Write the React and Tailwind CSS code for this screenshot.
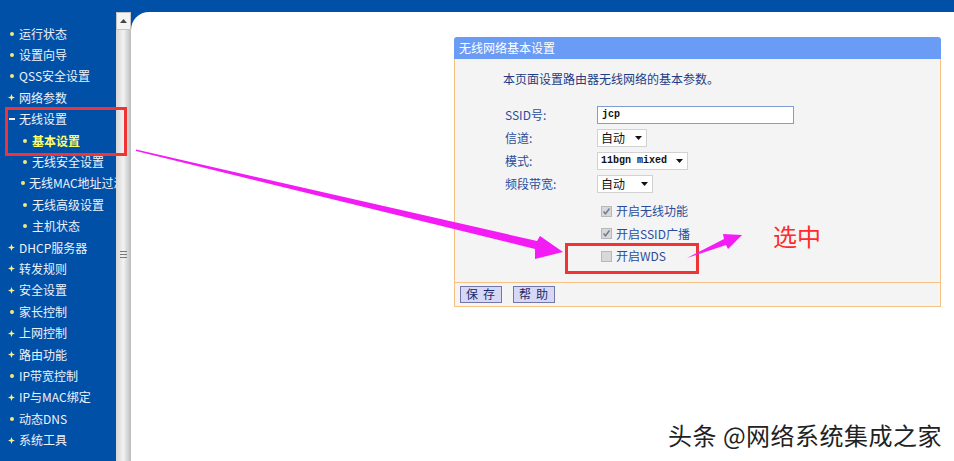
import React from "react";

const menu = [
  { t: "运行状态", k: "dot" },
  { t: "设置向导", k: "dot" },
  { t: "QSS安全设置", k: "dot" },
  { t: "网络参数", k: "plus" },
  { t: "无线设置", k: "minus" },
  { t: "基本设置", k: "sub", active: true },
  { t: "无线安全设置", k: "sub" },
  { t: "无线MAC地址过滤", k: "sub" },
  { t: "无线高级设置", k: "sub" },
  { t: "主机状态", k: "sub" },
  { t: "DHCP服务器", k: "plus" },
  { t: "转发规则", k: "plus" },
  { t: "安全设置", k: "plus" },
  { t: "家长控制", k: "dot" },
  { t: "上网控制", k: "plus" },
  { t: "路由功能", k: "plus" },
  { t: "IP带宽控制", k: "dot" },
  { t: "IP与MAC绑定", k: "plus" },
  { t: "动态DNS", k: "dot" },
  { t: "系统工具", k: "plus" },
];

const cjk = { fontFamily: '"Noto Sans CJK SC", "Noto Sans", sans-serif' };
const mono = { fontFamily: '"Liberation Mono", "Noto Sans CJK SC", monospace' };

function Bullet({ kind }) {
  if (kind === "minus") return <span className="block w-[6px] h-[2px] bg-[#f0f0f0]" />;
  if (kind === "plus")
    return (
      <svg width="7" height="7" viewBox="0 0 7 7">
        <path d="M3.5 0 L4.4 2.6 L7 3.5 L4.4 4.4 L3.5 7 L2.6 4.4 L0 3.5 L2.6 2.6 Z" fill="#fff27a" />
      </svg>
    );
  return <span className="block w-[4px] h-[4px] rounded-full bg-[#f6ea72]" />;
}

function Sidebar() {
  return (
    <div className="w-[116px] h-full bg-[#0050a8] pt-[23px] overflow-hidden shrink-0" style={cjk}>
      {menu.map((m) => {
        const sub = m.k === "sub";
        return (
          <div key={m.t} className={`h-[21.4px] flex items-center whitespace-nowrap ${sub ? "pl-[21px]" : "pl-[8px]"}`}>
            <span className="w-[7px] flex justify-center">
              <Bullet kind={m.k} />
            </span>
            <span
              className={`ml-[4px] text-[12px] leading-none ${m.active ? "text-[#ffff66] font-bold" : "text-[#eef2fa]"}`}
            >
              {m.t}
            </span>
          </div>
        );
      })}
    </div>
  );
}

function Scrollbar() {
  return (
    <div className="w-[15px] h-full flex flex-col bg-gradient-to-r from-[#d6d6d6] via-[#f2f2f2] to-[#bcbcbc] shrink-0">
      <div className="h-[18px] border border-[#c4c4c4] bg-[#f4f4f4] flex items-center justify-center">
        <svg width="7" height="4" viewBox="0 0 7 4">
          <path d="M0 4 L3.5 0 L7 4 Z" fill="#444" />
        </svg>
      </div>
      <div className="flex-1 flex items-center justify-center pt-[17px]">
        <div className="flex flex-col gap-[2px]">
          <span className="block w-[7px] h-px bg-[#777]" />
          <span className="block w-[7px] h-px bg-[#777]" />
          <span className="block w-[7px] h-px bg-[#777]" />
        </div>
      </div>
    </div>
  );
}

function Select({ value, width }) {
  const latin = value.startsWith("11");
  return (
    <div
      className="h-[18px] bg-white border border-[#d2d2d2] flex items-center justify-between pl-[3px] pr-[4px] text-[12px] text-[#111]"
      style={{ width }}
    >
      <span style={latin ? mono : cjk} className={latin ? "text-[10px] font-bold" : ""}>
        {value}
      </span>
      <svg width="7" height="4" viewBox="0 0 7 4">
        <path d="M0 0 L7 0 L3.5 4 Z" fill="#111" />
      </svg>
    </div>
  );
}

function Check({ checked, label }) {
  return (
    <div className="h-[22.5px] flex items-center pl-[4px]">
      <span className="w-[11px] h-[11px] border border-[#b8b8b8] bg-[#d8d8d8] flex items-center justify-center">
        {checked && (
          <svg width="9" height="9" viewBox="0 0 9 9">
            <path d="M1.5 4.5 L3.5 6.8 L7.5 1.5" stroke="#6f7f9a" strokeWidth="1.6" fill="none" />
          </svg>
        )}
      </span>
      <span className="ml-[4px] text-[12px] text-[#2b4c9b]">{label}</span>
    </div>
  );
}

function Panel() {
  const label = "w-[92px] text-[12px] text-[#2b4c9b]";
  const btn =
    "h-[17px] pl-[5px] pr-[1px] bg-[#d6d8f6] border border-[#7377a8] text-[12px] leading-none text-[#1a2a6a] tracking-[5px]";
  return (
    <div className="ml-[323px] mt-[25px] w-[487px]" style={cjk}>
      <div className="h-[22px] rounded-t-[3px] bg-[#6a9cf6] flex items-center pl-[5px] text-[12px] text-white">
        无线网络基本设置
      </div>
      <div className="border-x border-b border-[#f6c182] bg-[#f4f4f4]">
        <div className="pl-[48px] pt-[12px] pb-[14px]">
          <div className="text-[12px] leading-[16px] text-[#1f3c85]">本页面设置路由器无线网络的基本参数。</div>
          <div className="mt-[16px] pl-[2px]">
            <div className="h-[23px] flex items-center">
              <span className={label}>SSID号:</span>
              <div
                className="w-[197px] h-[18px] bg-white border border-[#7f9dd0] flex items-center pl-[4px] text-[10px] font-bold text-[#111]"
                style={mono}
              >
                jcp
              </div>
            </div>
            <div className="h-[23px] flex items-center">
              <span className={label}>信道:</span>
              <Select value="自动" width={50} />
            </div>
            <div className="h-[23px] flex items-center">
              <span className={label}>模式:</span>
              <Select value="11bgn mixed" width={91} />
            </div>
            <div className="h-[23px] flex items-center">
              <span className={label}>频段带宽:</span>
              <Select value="自动" width={56} />
            </div>
            <div className="pl-[92px] mt-[5px]">
              <Check checked label="开启无线功能" />
              <Check checked label="开启SSID广播" />
              <Check label="开启WDS" />
            </div>
          </div>
        </div>
        <div className="h-[24px] border-t border-[#f6c182] flex items-center gap-[11px] pl-[5px]">
          <button className={btn}>保存</button>
          <button className={btn}>帮助</button>
        </div>
      </div>
    </div>
  );
}

function Annotations() {
  return (
    <svg className="absolute left-0 top-0 pointer-events-none" width="954" height="461" viewBox="0 0 954 461">
      <rect x="6.5" y="108.5" width="119" height="46" fill="none" stroke="#f03434" strokeWidth="3" />
      <rect x="566.5" y="244.5" width="131" height="28" fill="none" stroke="#f03434" strokeWidth="3" />
      <polygon points="136,149.5 537,241 540,236 563,252 535,259 535,249 136,151" fill="#f41cf4" />
      <polygon points="687,258 724,239 723,234 742,235 728,249 726,245" fill="#f41cf4" />
    </svg>
  );
}

export default function App() {
  return (
    <div className="relative w-[954px] h-[461px] overflow-hidden flex bg-[#0050a8]">
      <Sidebar />
      <div className="flex-1 flex flex-col">
        <div className="h-[12px] shrink-0" />
        <div className="flex-1 flex min-h-0">
          <Scrollbar />
          <div className="flex-1 bg-white rounded-tl-[18px]">
            <Panel />
          </div>
        </div>
      </div>
      <Annotations />
      <div className="absolute left-[773px] top-[221px] text-[24px] leading-[30px] text-[#ff2a2a]" style={cjk}>
        选中
      </div>
      <div
        className="absolute left-[668px] top-[420px] text-[24px] leading-[30px] tracking-[0.5px] text-[#222]"
        style={{ ...cjk, textShadow: "1px 1px 0 #fff, -1px -1px 0 #fff" }}
      >
        头条 @网络系统集成之家
      </div>
    </div>
  );
}
